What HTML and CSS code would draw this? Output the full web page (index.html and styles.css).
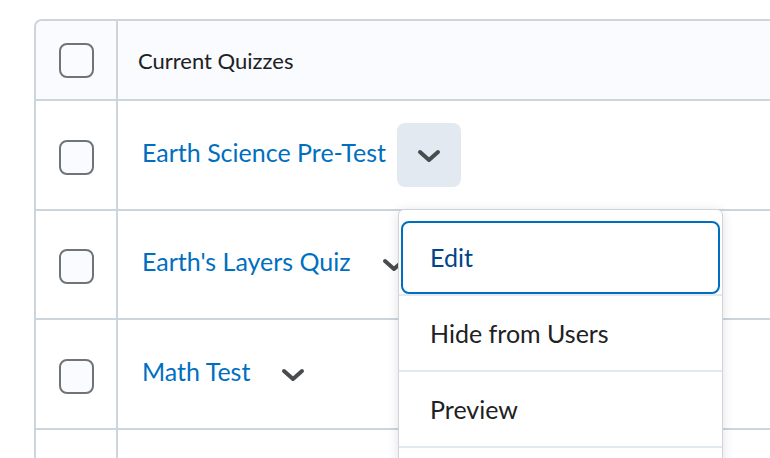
FILE: index.html
```html
<!DOCTYPE html>
<html lang="en">
<head>
<meta charset="utf-8">
<title>Quizzes</title>
<link rel="stylesheet" href="styles.css">
</head>
<body>
<div class="page">
  <div class="grid">
    <div class="row head">
      <div class="c-check"><span class="cb"></span></div>
      <div class="c-main"><span class="head-title">Current Quizzes</span></div>
    </div>
    <div class="row">
      <div class="c-check"><span class="cb"></span></div>
      <div class="c-main">
        <a class="quiz">Earth Science Pre-Test</a>
        <div class="dd">
          <button class="ctx is-open" aria-label="Actions for Earth Science Pre-Test">
            <svg class="chev" viewBox="0 0 24 14" width="24" height="14"><polyline points="3,3 12,11 21,3"/></svg>
          </button>
          <div class="menu">
            <div class="item focused">Edit</div>
            <div class="item">Hide from Users</div>
            <div class="item">Preview</div>
          </div>
        </div>
      </div>
    </div>
    <div class="row">
      <div class="c-check"><span class="cb"></span></div>
      <div class="c-main">
        <a class="quiz">Earth's Layers Quiz</a>
        <button class="ctx" aria-label="Actions for Earth's Layers Quiz">
          <svg class="chev" viewBox="0 0 24 14" width="24" height="14"><polyline points="3,3 12,11 21,3"/></svg>
        </button>
      </div>
    </div>
    <div class="row">
      <div class="c-check"><span class="cb"></span></div>
      <div class="c-main">
        <a class="quiz">Math Test</a>
        <button class="ctx" aria-label="Actions for Math Test">
          <svg class="chev" viewBox="0 0 24 14" width="24" height="14"><polyline points="3,3 12,11 21,3"/></svg>
        </button>
      </div>
    </div>
    <div class="row">
      <div class="c-check"></div>
      <div class="c-main"></div>
    </div>
  </div>
</div>
</body>
</html>
```
FILE: styles.css
```css
html, body {
  margin: 0;
  padding: 0;
  background: #ffffff;
  overflow: hidden;
}
body {
  font-family: Lato, "Noto Sans", sans-serif;
  color: #202122;
}
.page {
  padding: 19px 0 0 34px;
  height: 458px;
  box-sizing: border-box;
  overflow: hidden;
}
.grid {
  width: 736px;
  border-top: 2px solid #cdd5dc;
  border-left: 2px solid #cdd5dc;
  border-top-left-radius: 8px;
}
.row {
  display: flex;
  height: 107.5px;
  border-bottom: 2px solid #cdd5dc;
}
.row.head {
  height: 78px;
  background: #f9fbff;
  border-top-left-radius: 6px;
}
.c-check {
  width: 80px;
  flex: none;
  display: flex;
  align-items: center;
  justify-content: center;
}
.c-main {
  flex: 1;
  border-left: 2px solid #cdd5dc;
  display: flex;
  align-items: center;
  padding-left: 24px;
}
.head .c-main {
  padding-left: 20px;
}
.cb {
  width: 35px;
  height: 35px;
  box-sizing: border-box;
  border: 2px solid #6e7477;
  border-radius: 8px;
  background: #f9fbff;
  margin-top: 5px;
}
.head .cb {
  margin-top: 0;
}
.head-title {
  font-size: 22px;
  line-height: 1.2;
  margin-top: 2px;
}
.quiz {
  font-size: 25px;
  line-height: 1.2;
  color: #006fbf;
  margin-bottom: 6px;
  white-space: nowrap;
}
.dd {
  position: relative;
}
.ctx {
  width: 64px;
  height: 64px;
  margin-left: 11px;
  border: 0;
  border-radius: 8px;
  background: transparent;
  display: flex;
  align-items: center;
  justify-content: center;
  padding: 0;
  flex: none;
}
.ctx.is-open {
  background: #e3e9f1;
}
.chev {
  display: block;
  fill: none;
  stroke: #494c4e;
  stroke-width: 4;
  stroke-linecap: round;
  stroke-linejoin: round;
  margin-top: 2px;
}
.menu {
  position: absolute;
  z-index: 10;
  top: 86px;
  left: 12px;
  width: 325px;
  height: 300px;
  box-sizing: border-box;
  background: #ffffff;
  border: 1px solid #cdd5dc;
  border-radius: 6px;
  box-shadow: 0 2px 12px rgba(0, 0, 0, 0.12);
  padding-top: 10px;
}
.item {
  position: relative;
  height: 74px;
  border-bottom: 2px solid #e3e9f1;
  display: flex;
  align-items: center;
  padding-left: 31px;
  font-size: 25px;
  color: #202122;
  white-space: nowrap;
}
.item.focused {
  color: #004489;
}
.item.focused::after {
  content: "";
  position: absolute;
  inset: 1px 2px 0 2px;
  border: 2px solid #006fbf;
  border-radius: 8px;
}
```
